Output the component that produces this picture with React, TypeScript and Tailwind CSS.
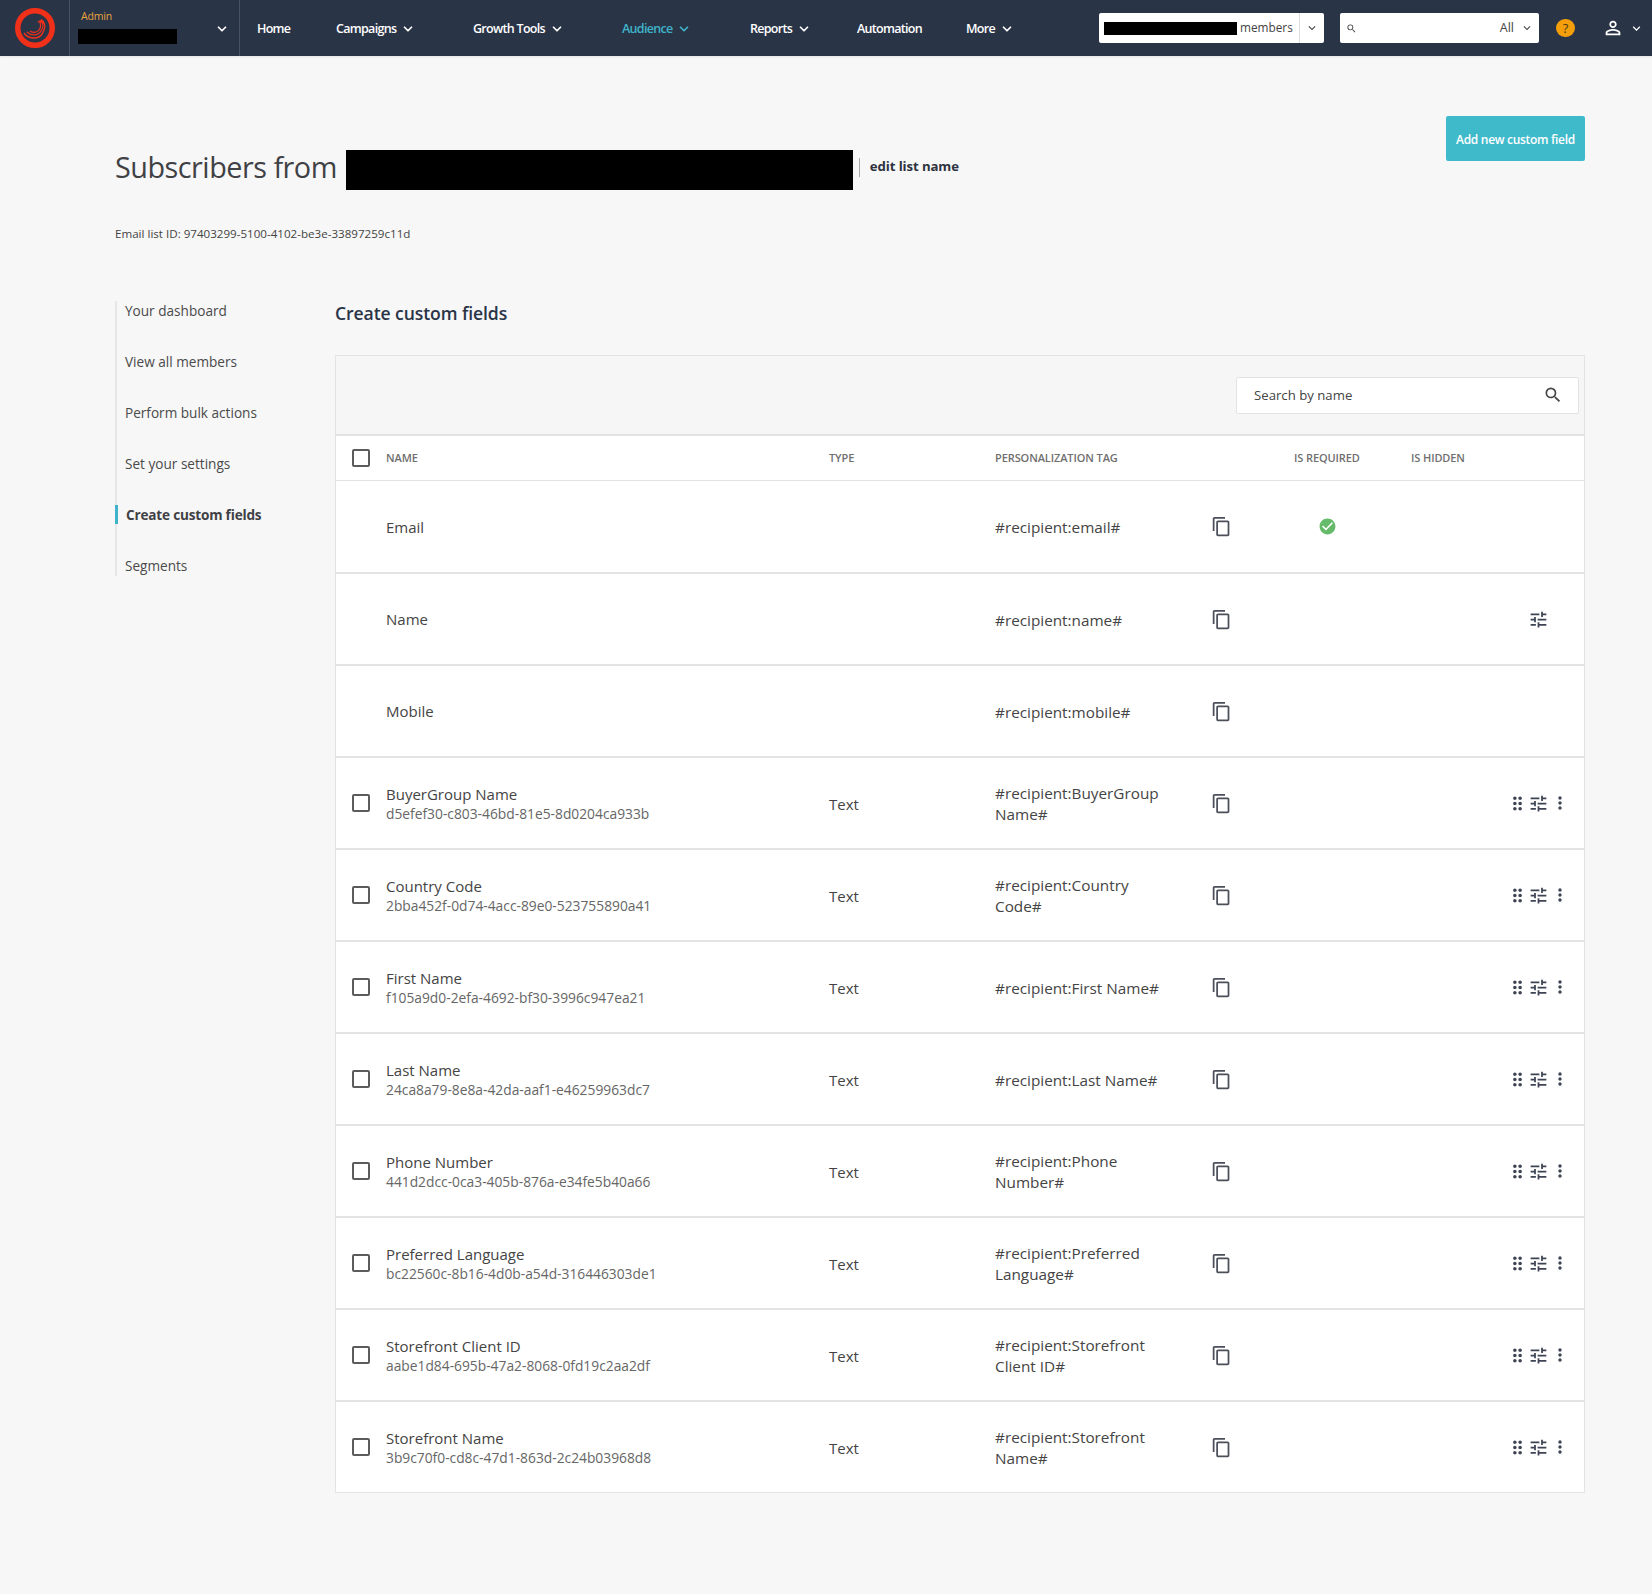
import React from 'react';
import { ChevronDown } from 'lucide-react';
import { MdContentCopy, MdTune, MdDragIndicator, MdMoreVert, MdSearch, MdPersonOutline, MdCheckCircle, MdKeyboardArrowDown } from 'react-icons/md';

const fixedRows = [
  { name: 'Email', tag: '#recipient:email#', required: true },
  { name: 'Name', tag: '#recipient:name#', tune: true },
  { name: 'Mobile', tag: '#recipient:mobile#' },
];

const customRows = [
  { name: 'BuyerGroup Name', id: 'd5efef30-c803-46bd-81e5-8d0204ca933b', tag: '#recipient:BuyerGroup\nName#' },
  { name: 'Country Code', id: '2bba452f-0d74-4acc-89e0-523755890a41', tag: '#recipient:Country\nCode#' },
  { name: 'First Name', id: 'f105a9d0-2efa-4692-bf30-3996c947ea21', tag: '#recipient:First Name#' },
  { name: 'Last Name', id: '24ca8a79-8e8a-42da-aaf1-e46259963dc7', tag: '#recipient:Last Name#' },
  { name: 'Phone Number', id: '441d2dcc-0ca3-405b-876a-e34fe5b40a66', tag: '#recipient:Phone\nNumber#' },
  { name: 'Preferred Language', id: 'bc22560c-8b16-4d0b-a54d-316446303de1', tag: '#recipient:Preferred\nLanguage#' },
  { name: 'Storefront Client ID', id: 'aabe1d84-695b-47a2-8068-0fd19c2aa2df', tag: '#recipient:Storefront\nClient ID#' },
  { name: 'Storefront Name', id: '3b9c70f0-cd8c-47d1-863d-2c24b03968d8', tag: '#recipient:Storefront\nName#' },
];

const sideItems = ['Your dashboard', 'View all members', 'Perform bulk actions', 'Set your settings', 'Create custom fields', 'Segments'];

const Logo = () => (
  <svg width="40" height="40" viewBox="0 0 40 40" fill="none">
    <circle cx="20" cy="20" r="17.25" stroke="#f1301a" strokeWidth="5.5" />
    <g stroke="#f1301a" fill="none">
      <path d="M9 25c4 6 14 7 18 1s3-9 1-13" strokeWidth="1.4" />
      <path d="M12 24c4 4 11 4 14-1s2-7 1-9" strokeWidth="1.2" />
      <path d="M15 23c3 2 7 2 9-1s2-5 1-7" strokeWidth="1.2" />
    </g>
    <path d="M22 14l5-3 3 5z" fill="#f1301a" />
  </svg>
);

const NavItem = ({ label, width, active, chevron }: { label: string; width: string; active?: boolean; chevron?: boolean }) => (
  <div className={`flex items-center shrink-0 pt-[2px] ${width} ${active ? 'text-[#3fb3c9]' : 'text-white'}`}>
    <span className="text-[12.5px] font-semibold tracking-[-0.7px]">{label}</span>
    {chevron && <ChevronDown size={14} strokeWidth={3} className="ml-[5px]" />}
  </div>
);

const Header = () => (
  <header className="h-14 bg-[#2a3447] flex items-center shadow-[0_1px_2px_rgba(0,0,0,0.08)]">
    <div className="w-[70px] h-full pl-[15px] flex items-center border-r border-[#4a5262]">
      <Logo />
    </div>
    <div className="w-[170px] h-full relative flex flex-col pl-2 border-r border-[#4a5262] mr-[17px]">
      <span className="text-[10.5px] text-[#e8a33d] mt-[9px] leading-[14px] pl-[3px] tracking-[-0.2px]">Admin</span>
      <div className="bg-black w-[99px] h-[15px] mt-[6px]" />
      <ChevronDown size={14} strokeWidth={3} className="absolute right-[10px] top-[22px] text-white" />
    </div>
    <NavItem label="Home" width="w-[79px]" />
    <NavItem label="Campaigns" width="w-[137px]" chevron />
    <NavItem label="Growth Tools" width="w-[149px]" chevron />
    <NavItem label="Audience" width="w-[128px]" active chevron />
    <NavItem label="Reports" width="w-[107px]" chevron />
    <NavItem label="Automation" width="w-[109px]" />
    <NavItem label="More" width="w-[60px]" chevron />
    <div className="ml-auto flex items-center">
      <div className="w-[225px] h-[30px] bg-white rounded-[2px] flex items-center pl-[5px]">
        <div className="bg-black w-[133px] h-[13px]" />
        <span className="ml-[3px] text-[11.8px] text-[#444]">members</span>
        <div className="ml-auto w-[25px] h-full border-l border-[#ddd] flex items-center justify-center text-[#444]">
          <MdKeyboardArrowDown size={14} />
        </div>
      </div>
      <div className="ml-[16px] w-[199px] h-[30px] bg-white rounded-[2px] flex items-center pl-[6px] text-[#444]">
        <MdSearch size={11} />
        <span className="ml-auto text-[12.5px]">All</span>
        <MdKeyboardArrowDown size={14} className="ml-[6px] mr-[5px]" />
      </div>
      <div className="ml-[17px] w-[19px] h-[18px] rounded-full bg-[#f59e0b] flex items-center justify-center text-[13px] text-[#4b3a12] leading-none">?</div>
      <MdPersonOutline size={22} className="ml-[27px] text-white" />
      <MdKeyboardArrowDown size={15} className="ml-[5px] mr-[8px] text-white" />
    </div>
  </header>
);

const Box = () => <div className="w-[18px] h-[18px] rounded-[2px] border-2 border-[#5c5c5c] bg-white" />;

const rowGrid = 'grid grid-cols-[50px_443px_166px_216px_83px_117px_1fr] items-center';

const Row = ({ name, id, tag, required, tune, custom }: { name: string; id?: string; tag: string; required?: boolean; tune?: boolean; custom?: boolean }) => (
  <div className={`${rowGrid} h-[92px] border-t-2 border-[#e3e3e3] bg-white`}>
    <div className="pl-4">{custom && <Box />}</div>
    <div>
      <div className="text-[15px] leading-[20px] text-[#444]">{name}</div>
      {id && <div className="text-[13.8px] leading-[18px] mt-[1px] text-[#666]">{id}</div>}
    </div>
    <div className="text-[15px] text-[#444] pt-[2px]">{custom ? 'Text' : ''}</div>
    <div className="text-[15.3px] leading-[21px] text-[#444] whitespace-pre-line pt-[2px]">{tag}</div>
    <div className="text-[#4a4f59]"><MdContentCopy size={21} /></div>
    <div className="pl-[24px]">{required && <MdCheckCircle size={19} className="text-[#66bb6a]" />}</div>
    <div className="-ml-[117px] justify-self-end flex items-center text-[#3d4453] pr-[14px]">
      {custom && <MdDragIndicator size={21} />}
      {(custom || tune) && <MdTune size={21} />}
      {custom ? <MdMoreVert size={20} className="ml-[1px]" /> : <div className="w-[21px]" />}
    </div>
  </div>
);

export default function App() {
  return (
    <div className="min-h-[1594px] bg-[#f7f7f7] font-['Open_Sans',sans-serif] text-[#444]">
      <Header />
      <main className="pl-[115px] pr-[67px]">
        <div className="relative flex items-center pt-[94px] h-[134px]">
          <h1 className="text-[28.8px] leading-[40px] text-[#3f4145] tracking-[-0.5px] -mt-[6px]">Subscribers from</h1>
          <div className="bg-black w-[507px] h-10 ml-[9px]" />
          <div className="ml-[6px] -mt-[6px] h-[19px] border-l border-[#aaa] pl-[10px] flex items-center text-[13.2px] font-bold text-[#2d3340] tracking-[-0.1px]">edit list name</div>
          <button className="absolute right-0 top-[60px] w-[139px] h-[45px] pt-[2px] rounded-[2px] bg-[#3fbacb] text-white text-[12px] font-semibold tracking-[-0.3px]">Add new custom field</button>
        </div>
        <div className="mt-[36px] text-[11.6px] leading-[16px] text-[#444]">Email list ID: 97403299-5100-4102-be3e-33897259c11d</div>
        <div className="flex mt-[60px]">
          <nav className="w-[220px] h-[275px] flex flex-col justify-between border-l-2 border-[#e6e6e6] -mt-[1px]">
            {sideItems.map((item) => (
              <div key={item} className={`relative leading-[20px] text-[13.6px] ${item === 'Create custom fields' ? 'pl-[9px] font-bold tracking-[-0.2px] text-[#3f4145]' : 'pl-2 text-[#4a4a4a]'}`}>
                {item === 'Create custom fields' && <span className="absolute -left-[2px] top-0 w-[3px] h-[19px] bg-[#3fb3c9]" />}
                {item}
              </div>
            ))}
          </nav>
          <section className="flex-1">
            <h2 className="text-[17.6px] font-semibold leading-6 text-[#2a3447] tracking-[-0.1px] -mt-[1px]">Create custom fields</h2>
            <div className="mt-[30px] border border-[#e3e3e3]">
              <div className="h-[78px] bg-[#f6f6f6] flex items-start justify-end pt-[21px] pr-[5px]">
                <div className="w-[343px] h-[37px] bg-white border border-[#e3e3e3] rounded-[2px] flex items-center pl-[17px] pr-[15px] text-[13.2px] text-[#444]">
                  <span className="pt-[1px]">Search by name</span>
                  <MdSearch size={20} className="ml-auto -mt-[2px]" />
                </div>
              </div>
              <div className={`${rowGrid} h-[46px] bg-white border-t-2 border-[#e3e3e3] text-[11px] font-semibold text-[#6f6f6f] tracking-[-0.1px]`}>
                <div className="pl-4"><Box /></div>
                <div>NAME</div>
                <div>TYPE</div>
                <div>PERSONALIZATION TAG</div>
                <div />
                <div>IS REQUIRED</div>
                <div>IS HIDDEN</div>
              </div>
              <div className="[&>*:first-child]:border-t">
                {fixedRows.map((r) => <Row key={r.name} {...r} />)}
                {customRows.map((r) => <Row key={r.name} {...r} custom />)}
              </div>
            </div>
          </section>
        </div>
      </main>
    </div>
  );
}
